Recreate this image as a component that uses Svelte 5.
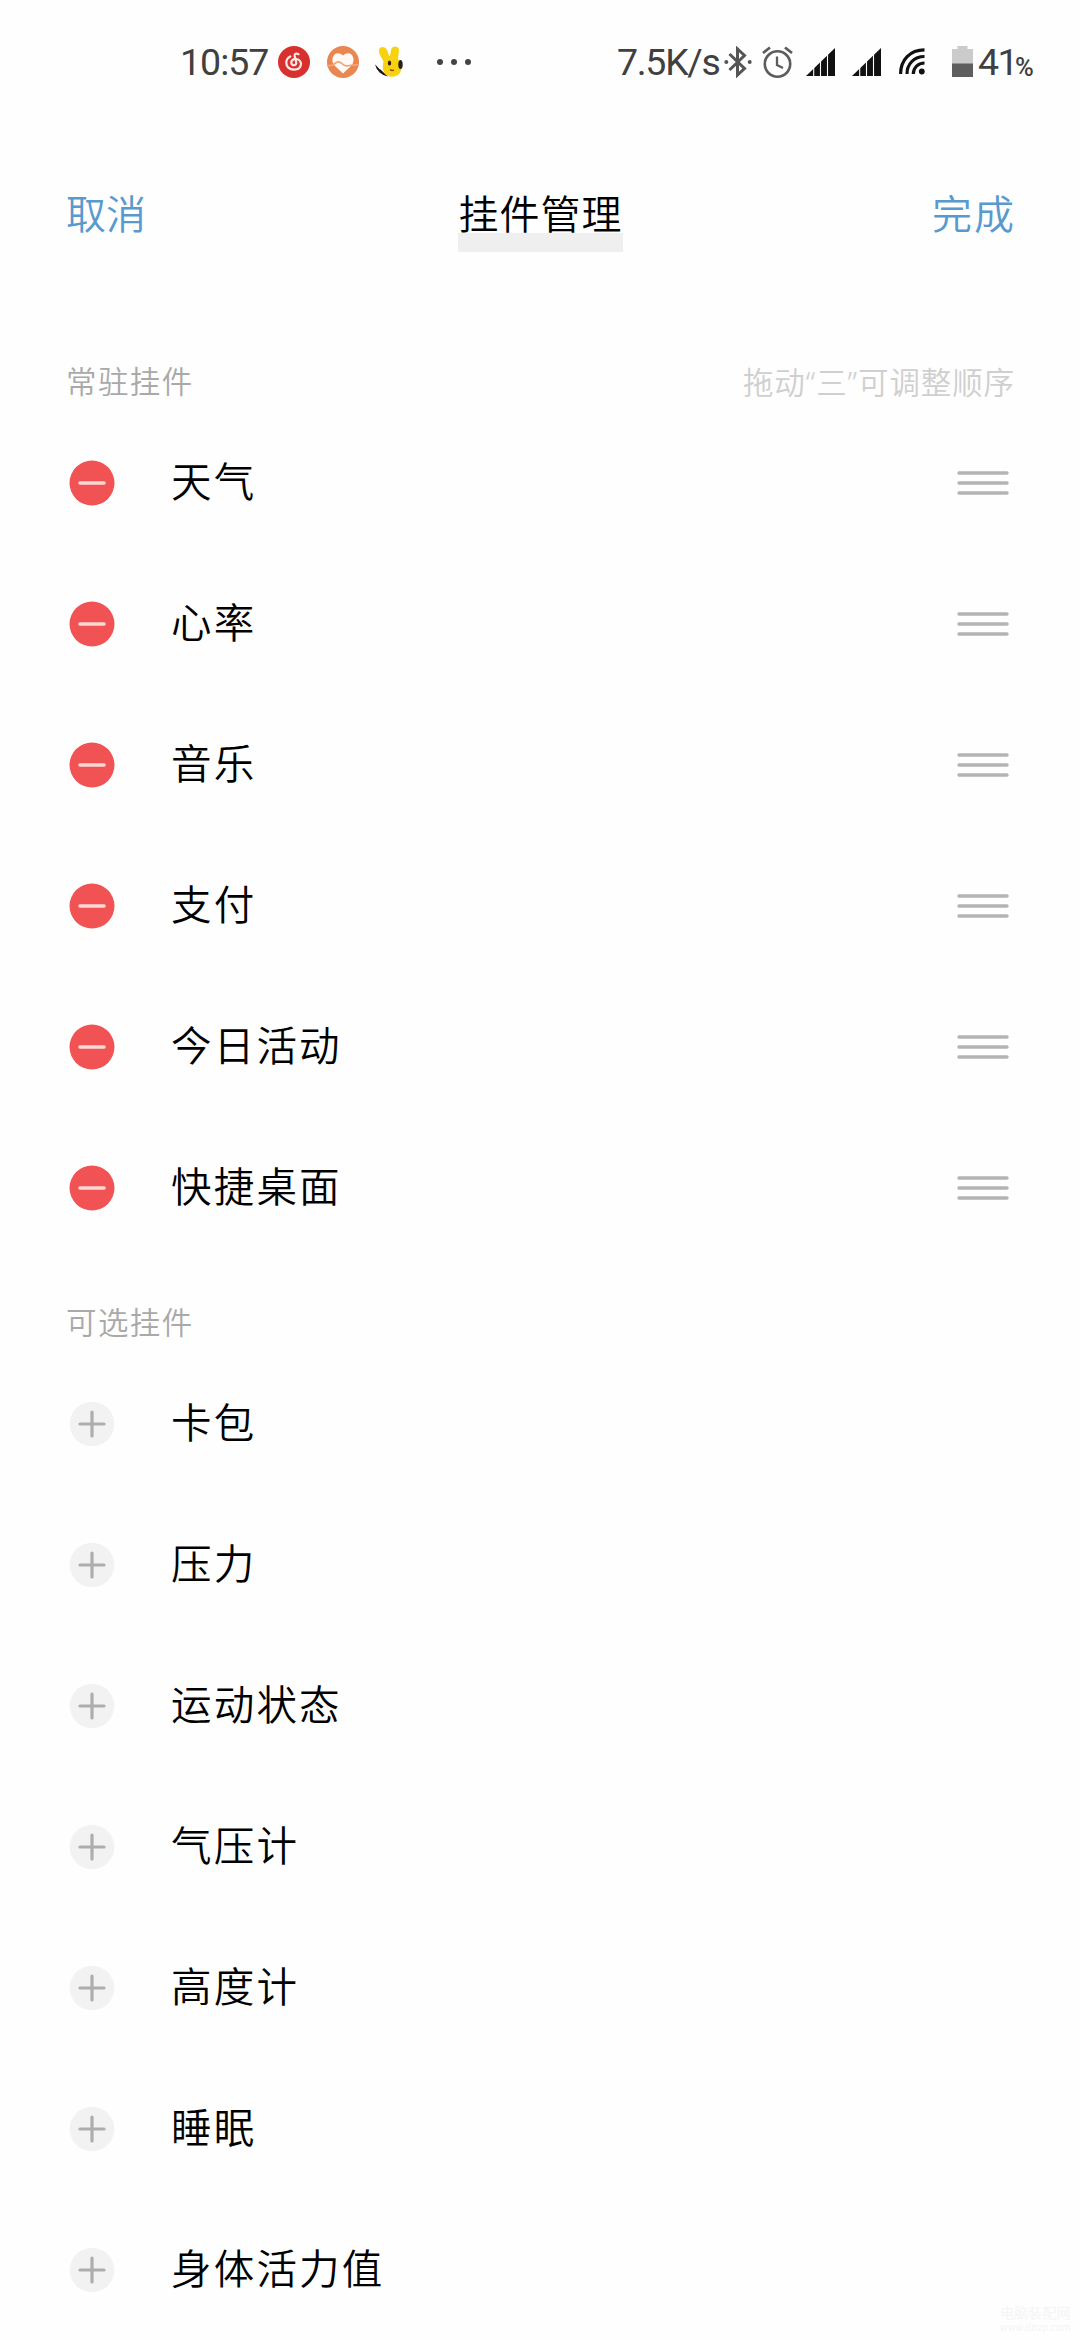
<script lang="ts">
	let pinned: string[] = ['天气', '心率', '音乐', '支付', '今日活动', '快捷桌面'];
	let optional: string[] = ['卡包', '压力', '运动状态', '气压计', '高度计', '睡眠', '身体活力值'];
	const signals = [1, 2];

	const add = (name: string) => {
		optional = optional.filter((item) => item !== name);
		pinned = [...pinned, name];
	};

	const remove = (name: string) => {
		pinned = pinned.filter((item) => item !== name);
		optional = [...optional, name];
	};
</script>

<div class="screen">
	<div class="status-bar">
		<span class="clock">10:57</span>
		<svg class="app-icon" viewBox="0 0 32 32">
			<circle cx="16" cy="16" r="16" fill="#d8302f" />
			<path
				d="M20.5 8.2c-2.2-1.3-4.2-.3-3.8 1.8l1.5 6.3c.6 3.7-4.9 4.1-4.9.3 0-2.6 2.4-3.9 5-3.6 6.700 1 6.200 10.300-2 10.700-5.300.1-8-3.200-8-7 0-2.800 1.500-5 4-6.200"
				fill="none"
				stroke="#ffe9e4"
				stroke-width="2.2"
				stroke-linecap="round"
			/>
		</svg>
		<svg class="app-icon" viewBox="0 0 32 32">
			<circle cx="16" cy="16" r="16" fill="#ea8650" />
			<path d="M16 27.500 7 19C2.500 12 8.500 3 16 9.500c7.500-6.500 13.500 2.500 9 9.500z" fill="#fffaf5" />
			<path
				d="M0 19.500c5 .5 6-.5 9-2.800 5-3.400 6.500 3.800 11 3.200 4-.6 6-1.400 12-1"
				fill="none"
				stroke="#f0a679"
				stroke-width="1.700"
			/>
		</svg>
		<svg class="app-icon" viewBox="0 0 32 32">
			<path d="M0 18.500 13 30.500A16 16 0 0 1 0 18.500z" fill="#1c1712" />
			<path d="M3 20l2 3m0-3l5 7" stroke="#fff" stroke-width="1.200" />
			<path
				d="M4 4c1-4.500 7-3.500 8.500 1l1.500 5h1l1-6c1-5 8-4.500 8 0 0 3-1 6-1 9 5 5 5 16-4 17.500-9 1.500-13-6-10.500-15C7 12 3.500 8 4 4z"
				fill="#f8d210"
			/>
			<ellipse cx="14.500" cy="17" rx="1.700" ry="2.500" fill="#2a2015" />
			<ellipse cx="25.500" cy="18.500" rx="2.200" ry="4.500" fill="#2a2015" />
			<path d="M15 23.500q1.500 1.500 4 .7" fill="none" stroke="#a33d18" stroke-width="1.400" />
		</svg>
		<svg class="more" viewBox="0 0 36 8">
			<circle cx="4" cy="4" r="3" />
			<circle cx="18" cy="4" r="3" />
			<circle cx="32" cy="4" r="3" />
		</svg>

		<span class="speed">7.5K/s</span>
		<svg class="bluetooth" viewBox="0 0 28 32">
			<path
				d="M5.500 8 20.500 22.500 13.500 29V3l7 6.500L5.500 24"
				fill="none"
				stroke="#555"
				stroke-width="3"
			/>
			<circle cx="2.300" cy="16" r="2" fill="#555" />
			<circle cx="25.700" cy="16" r="2" fill="#555" />
		</svg>
		<svg class="alarm" viewBox="0 0 31 32" fill="none" stroke="#5c5c5c" stroke-width="2.600">
			<circle cx="15.500" cy="18" r="12.700" />
			<path d="M15 10.500v8.500l6 3" stroke-width="2.300" />
			<path d="M1 7 8 1.500M30 7l-7-5.500" stroke-width="2.800" />
		</svg>
		{#each signals as signal (signal)}
			<svg class="signal" viewBox="0 0 29 28">
				<path d="M0 28 29 0v28z" fill="#111" />
				<path d="M7.700 15v13M14.500 8v20M21.500 2v26" stroke="#fff" stroke-width="1.100" />
			</svg>
		{/each}
		<svg class="wifi" viewBox="0 0 26 27">
			<g fill="none" stroke="#111" stroke-width="3.200">
				<path d="M1.600 26C1.600 12 11 1.800 25.500 1.800" />
				<path d="M8 26C8 16 15 8.500 25.500 8.500" />
				<path d="M14.300 26c0-6 4.500-11 11.200-11" />
			</g>
			<circle cx="22.800" cy="23.500" r="2.900" fill="#111" />
		</svg>
		<svg class="battery" viewBox="0 0 21 31">
			<path d="M0 3h5.500V0h10v3H21v15H0z" fill="#cbcbcb" />
			<path d="M0 17.500h21V31H0z" fill="#5e5e5e" />
		</svg>
		<span class="level">41</span>
		<span class="percent">%</span>
	</div>

	<div class="header">
		<button class="link">取消</button>
		<h1 class="title">挂件管理</h1>
		<button class="link done">完成</button>
	</div>

	<div class="section">
		<div class="section-head">
			<span class="label">常驻挂件</span>
			<span class="hint">拖动“三”可调整顺序</span>
		</div>
		{#each pinned as name (name)}
			<div class="row">
				<button class="toggle" aria-label="移除{name}" on:click={() => remove(name)}>
					<svg viewBox="0 0 46 46">
						<circle cx="23" cy="23" r="22.500" fill="#f15354" />
						<path d="M11 23h24" stroke="#fbd9d3" stroke-width="3.600" stroke-linecap="round" />
					</svg>
				</button>
				<span class="name">{name}</span>
				<svg class="handle" viewBox="0 0 52 24">
					<path d="M2 2h48M2 12h48M2 22h48" stroke="#b4b4b4" stroke-width="3.400" stroke-linecap="round" />
				</svg>
			</div>
		{/each}
	</div>

	<div class="section optional">
		<div class="section-head">
			<span class="label">可选挂件</span>
		</div>
		{#each optional as name (name)}
			<div class="row">
				<button class="toggle" aria-label="添加{name}" on:click={() => add(name)}>
					<svg viewBox="0 0 46 46">
						<circle cx="23" cy="23" r="22.300" fill="#f2f2f2" />
						<path d="M11 23h24M23 11v24" stroke="#adadad" stroke-width="3.200" stroke-linecap="round" />
					</svg>
				</button>
				<span class="name">{name}</span>
			</div>
		{/each}
	</div>

	<div class="watermark">
		<span>电脑装配网</span>
		<span class="site">www.dnzp.com</span>
	</div>
</div>

<style>
	:global(body) {
		background: #fefefe;
	}
	.screen {
		position: relative;
		width: 1080px;
		height: 2340px;
		overflow: hidden;
		background: #fefefe;
		color: #000;
		font-family: 'Noto Sans CJK SC', sans-serif;
		font-weight: 350;
	}
	svg {
		display: block;
		flex-shrink: 0;
	}
	button {
		padding: 0;
		border: none;
		background: none;
		font: inherit;
	}
	.status-bar {
		height: 123px;
		padding-left: 180px;
		display: flex;
		align-items: center;
		font-family: Roboto, sans-serif;
		font-weight: 400;
		font-size: 37.5px;
		line-height: 44px;
		color: #404040;
		white-space: nowrap;
	}
	.clock {
		width: 98px;
		letter-spacing: -1px;
	}
	.app-icon {
		width: 32px;
		height: 32px;
		margin-right: 16.5px;
	}
	.more {
		width: 36px;
		height: 8px;
		margin-left: 12.5px;
		fill: #444;
	}
	.speed {
		width: 107px;
		margin-left: 145px;
		letter-spacing: -1.3px;
	}
	.bluetooth {
		width: 28px;
		height: 32px;
	}
	.alarm {
		width: 31px;
		height: 32px;
		margin: 0 13px 0 10px;
	}
	.signal {
		width: 29px;
		height: 28px;
		margin-right: 17px;
	}
	.wifi {
		width: 26px;
		height: 27px;
		margin-left: 1px;
	}
	.battery {
		width: 21px;
		height: 31px;
		margin: 0 5px 0 27px;
	}
	.level {
		width: 37px;
		letter-spacing: -1.5px;
	}
	.percent {
		padding-top: 10px;
		font-size: 25.5px;
		font-weight: 500;
		line-height: 28px;
	}
	.header {
		height: 182px;
		padding: 0 66px;
		display: grid;
		grid-template-columns: 1fr auto 1fr;
		align-items: center;
	}
	.link {
		justify-self: start;
		padding-bottom: 4px;
		color: #5899ce;
		font-size: 40px;
		line-height: 60px;
	}
	.done {
		justify-self: end;
		letter-spacing: 2px;
		margin-right: -2px;
	}
	.title {
		margin: 0;
		padding: 0 0 4px 1px;
		font-weight: 350;
		font-size: 40px;
		line-height: 72px;
		letter-spacing: 1px;
		background: linear-gradient(#efefef, #efefef) no-repeat bottom / 100% 19px;
	}
	.section {
		padding: 0 66px;
	}
	.section:not(.optional) {
		margin-top: 47px;
	}
	.optional {
		margin-top: 35px;
	}
	.section-head {
		height: 60px;
		display: flex;
		align-items: center;
		justify-content: space-between;
		font-size: 30.5px;
		line-height: 60px;
		letter-spacing: 1.4px;
	}
	.label {
		padding-bottom: 4px;
		color: #a9a9a9;
	}
	.hint {
		margin-right: -1px;
		color: #cfcfcf;
		font-family: 'Noto Sans', 'Noto Sans CJK SC', sans-serif;
		letter-spacing: 0.9px;
	}
	.row {
		height: 141px;
		display: flex;
		align-items: center;
	}
	.toggle {
		width: 46px;
		height: 46px;
		margin: 0 56px 0 3px;
	}
	.name {
		padding-bottom: 5px;
		font-size: 40.5px;
		line-height: 60px;
		letter-spacing: 2.2px;
	}
	.handle {
		width: 52px;
		height: 24px;
		margin-left: auto;
		margin-right: 5px;
	}
	.watermark {
		position: absolute;
		right: 9px;
		bottom: 7px;
		display: flex;
		flex-direction: column;
		align-items: center;
		font-size: 14px;
		line-height: 17px;
		color: #f4f4f4;
	}
	.site {
		font-size: 10px;
		line-height: 12px;
	}
</style>
